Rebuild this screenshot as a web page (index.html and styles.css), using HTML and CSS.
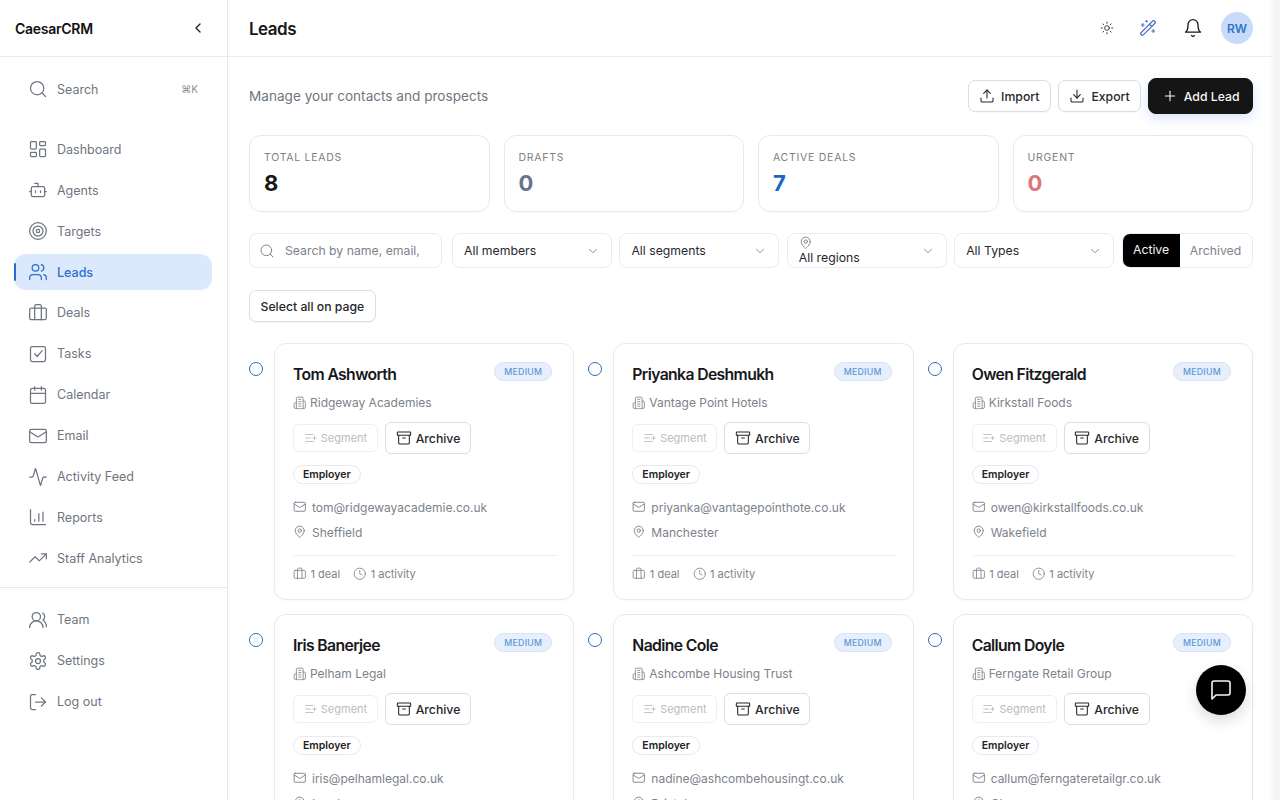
FILE: index.html
```html
<!DOCTYPE html>
<html lang="en">
<head>
    <meta charset="UTF-8">
    <meta name="viewport" content="width=device-width, initial-scale=1.0">
    <title>CaesarCRM - Leads</title>
    <link rel="stylesheet" href="styles.css">
</head>
<body>
    <svg class="icon-defs" xmlns="http://www.w3.org/2000/svg">
        <symbol id="i-search" viewBox="0 0 24 24"><circle cx="11" cy="11" r="8"/><path d="m21 21-4.3-4.3"/></symbol>
        <symbol id="i-dashboard" viewBox="0 0 24 24"><rect x="3" y="3" width="7" height="9" rx="1"/><rect x="14" y="3" width="7" height="5" rx="1"/><rect x="14" y="12" width="7" height="9" rx="1"/><rect x="3" y="16" width="7" height="5" rx="1"/></symbol>
        <symbol id="i-bot" viewBox="0 0 24 24"><path d="M12 8V4H8"/><rect x="4" y="8" width="16" height="12" rx="2"/><path d="M2 14h2"/><path d="M20 14h2"/><path d="M15 13v2"/><path d="M9 13v2"/></symbol>
        <symbol id="i-target" viewBox="0 0 24 24"><circle cx="12" cy="12" r="10"/><circle cx="12" cy="12" r="6"/><circle cx="12" cy="12" r="2"/></symbol>
        <symbol id="i-users" viewBox="0 0 24 24"><path d="M16 21v-2a4 4 0 0 0-4-4H6a4 4 0 0 0-4 4v2"/><circle cx="9" cy="7" r="4"/><path d="M22 21v-2a4 4 0 0 0-3-3.87"/><path d="M16 3.13a4 4 0 0 1 0 7.75"/></symbol>
        <symbol id="i-team" viewBox="0 0 24 24"><path d="M18 21a8 8 0 0 0-16 0"/><circle cx="10" cy="8" r="5"/><path d="M22 20c0-3.37-2-6.5-4-8a5 5 0 0 0-.45-8.3"/></symbol>
        <symbol id="i-briefcase" viewBox="0 0 24 24"><path d="M16 20V4a2 2 0 0 0-2-2h-4a2 2 0 0 0-2 2v16"/><rect x="2" y="6" width="20" height="14" rx="2"/></symbol>
        <symbol id="i-check" viewBox="0 0 24 24"><rect x="3" y="3" width="18" height="18" rx="2"/><path d="m8 12 3 3 6-7"/></symbol>
        <symbol id="i-calendar" viewBox="0 0 24 24"><path d="M8 2v4"/><path d="M16 2v4"/><rect x="3" y="4" width="18" height="18" rx="2"/><path d="M3 10h18"/></symbol>
        <symbol id="i-mail" viewBox="0 0 24 24"><rect x="2" y="4" width="20" height="16" rx="2"/><path d="m22 7-8.97 5.7a1.94 1.94 0 0 1-2.06 0L2 7"/></symbol>
        <symbol id="i-activity" viewBox="0 0 24 24"><path d="M22 12h-2.48a2 2 0 0 0-1.93 1.46l-2.35 8.36a.25.25 0 0 1-.48 0L9.24 2.18a.25.25 0 0 0-.48 0l-2.35 8.36A2 2 0 0 1 4.49 12H2"/></symbol>
        <symbol id="i-chart" viewBox="0 0 24 24"><path d="M3 3v16a2 2 0 0 0 2 2h16"/><path d="M8 17v-2"/><path d="M13 17V8"/><path d="M18 17V6"/></symbol>
        <symbol id="i-trend" viewBox="0 0 24 24"><path d="M22 7 13.5 15.5l-5-5L2 17"/><path d="M16 7h6v6"/></symbol>
        <symbol id="i-settings" viewBox="0 0 24 24"><path d="M12.22 2h-.44a2 2 0 0 0-2 2v.18a2 2 0 0 1-1 1.73l-.43.25a2 2 0 0 1-2 0l-.15-.08a2 2 0 0 0-2.73.73l-.22.38a2 2 0 0 0 .73 2.73l.15.1a2 2 0 0 1 1 1.72v.51a2 2 0 0 1-1 1.74l-.15.09a2 2 0 0 0-.73 2.73l.22.38a2 2 0 0 0 2.73.73l.15-.08a2 2 0 0 1 2 0l.43.25a2 2 0 0 1 1 1.73V20a2 2 0 0 0 2 2h.44a2 2 0 0 0 2-2v-.18a2 2 0 0 1 1-1.73l.43-.25a2 2 0 0 1 2 0l.15.08a2 2 0 0 0 2.73-.73l.22-.39a2 2 0 0 0-.73-2.73l-.15-.08a2 2 0 0 1-1-1.74v-.5a2 2 0 0 1 1-1.74l.15-.09a2 2 0 0 0 .73-2.73l-.22-.38a2 2 0 0 0-2.73-.73l-.15.08a2 2 0 0 1-2 0l-.43-.25a2 2 0 0 1-1-1.73V4a2 2 0 0 0-2-2z"/><circle cx="12" cy="12" r="3"/></symbol>
        <symbol id="i-logout" viewBox="0 0 24 24"><path d="M9 21H5a2 2 0 0 1-2-2V5a2 2 0 0 1 2-2h4"/><path d="m16 17 5-5-5-5"/><path d="M21 12H9"/></symbol>
        <symbol id="i-chevron-left" viewBox="0 0 24 24"><path d="m15 18-6-6 6-6"/></symbol>
        <symbol id="i-chevron-down" viewBox="0 0 24 24"><path d="m6 9 6 6 6-6"/></symbol>
        <symbol id="i-sun" viewBox="0 0 24 24"><circle cx="12" cy="12" r="4"/><path d="M12 2v2"/><path d="M12 20v2"/><path d="m4.93 4.93 1.41 1.41"/><path d="m17.66 17.66 1.41 1.41"/><path d="M2 12h2"/><path d="M20 12h2"/><path d="m6.34 17.66-1.41 1.41"/><path d="m19.07 4.93-1.41 1.41"/></symbol>
        <symbol id="i-wand" viewBox="0 0 24 24"><path d="m21.64 3.64-1.28-1.28a1.21 1.21 0 0 0-1.72 0L2.36 18.64a1.21 1.21 0 0 0 0 1.72l1.28 1.28a1.2 1.2 0 0 0 1.72 0L21.64 5.36a1.2 1.2 0 0 0 0-1.72"/><path d="m14 7 3 3"/><path d="M5 6v4"/><path d="M19 14v4"/><path d="M10 2v2"/><path d="M7 8H3"/><path d="M21 16h-4"/><path d="M11 3H9"/></symbol>
        <symbol id="i-bell" viewBox="0 0 24 24"><path d="M6 8a6 6 0 0 1 12 0c0 7 3 9 3 9H3s3-2 3-9"/><path d="M10.3 21a1.94 1.94 0 0 0 3.4 0"/></symbol>
        <symbol id="i-upload" viewBox="0 0 24 24"><path d="M21 15v4a2 2 0 0 1-2 2H5a2 2 0 0 1-2-2v-4"/><path d="m17 8-5-5-5 5"/><path d="M12 3v12"/></symbol>
        <symbol id="i-download" viewBox="0 0 24 24"><path d="M21 15v4a2 2 0 0 1-2 2H5a2 2 0 0 1-2-2v-4"/><path d="m7 10 5 5 5-5"/><path d="M12 15V3"/></symbol>
        <symbol id="i-plus" viewBox="0 0 24 24"><path d="M5 12h14"/><path d="M12 5v14"/></symbol>
        <symbol id="i-pin" viewBox="0 0 24 24"><path d="M20 10c0 6-8 12-8 12s-8-6-8-12a8 8 0 0 1 16 0Z"/><circle cx="12" cy="10" r="3"/></symbol>
        <symbol id="i-building" viewBox="0 0 24 24"><path d="M6 22V4a2 2 0 0 1 2-2h8a2 2 0 0 1 2 2v18Z"/><path d="M6 12H4a2 2 0 0 0-2 2v6a2 2 0 0 0 2 2h2"/><path d="M18 9h2a2 2 0 0 1 2 2v9a2 2 0 0 1-2 2h-2"/><path d="M10 6h4"/><path d="M10 10h4"/><path d="M10 14h4"/><path d="M10 18h4"/></symbol>
        <symbol id="i-archive" viewBox="0 0 24 24"><rect x="2" y="3" width="20" height="5" rx="1"/><path d="M4 8v11a2 2 0 0 0 2 2h12a2 2 0 0 0 2-2V8"/><path d="M10 12h4"/></symbol>
        <symbol id="i-segment" viewBox="0 0 24 24"><path d="M11 12H3"/><path d="M16 6H3"/><path d="M16 18H3"/><path d="M18 9v6"/><path d="M21 12h-6"/></symbol>
        <symbol id="i-clock" viewBox="0 0 24 24"><circle cx="12" cy="12" r="10"/><path d="M12 6v6l4 2"/></symbol>
        <symbol id="i-message" viewBox="0 0 24 24"><path d="M21 15a2 2 0 0 1-2 2H7l-4 4V5a2 2 0 0 1 2-2h14a2 2 0 0 1 2 2z"/></symbol>
    </svg>

    <div class="app">
        <aside class="sidebar">
            <div class="brand">
                <span class="brand-name">CaesarCRM</span>
                <svg class="icon brand-toggle"><use href="#i-chevron-left"/></svg>
            </div>
            <div class="side-search">
                <a class="nav-item">
                    <svg class="icon nav-icon"><use href="#i-search"/></svg>
                    <span>Search</span>
                    <span class="shortcut">⌘K</span>
                </a>
            </div>
            <nav class="nav-main">
                <a class="nav-item"><svg class="icon nav-icon"><use href="#i-dashboard"/></svg><span>Dashboard</span></a>
                <a class="nav-item"><svg class="icon nav-icon"><use href="#i-bot"/></svg><span>Agents</span></a>
                <a class="nav-item"><svg class="icon nav-icon"><use href="#i-target"/></svg><span>Targets</span></a>
                <a class="nav-item active"><svg class="icon nav-icon"><use href="#i-users"/></svg><span>Leads</span></a>
                <a class="nav-item"><svg class="icon nav-icon"><use href="#i-briefcase"/></svg><span>Deals</span></a>
                <a class="nav-item"><svg class="icon nav-icon"><use href="#i-check"/></svg><span>Tasks</span></a>
                <a class="nav-item"><svg class="icon nav-icon"><use href="#i-calendar"/></svg><span>Calendar</span></a>
                <a class="nav-item"><svg class="icon nav-icon"><use href="#i-mail"/></svg><span>Email</span></a>
                <a class="nav-item"><svg class="icon nav-icon"><use href="#i-activity"/></svg><span>Activity Feed</span></a>
                <a class="nav-item"><svg class="icon nav-icon"><use href="#i-chart"/></svg><span>Reports</span></a>
                <a class="nav-item"><svg class="icon nav-icon"><use href="#i-trend"/></svg><span>Staff Analytics</span></a>
            </nav>
            <nav class="nav-bottom">
                <a class="nav-item"><svg class="icon nav-icon"><use href="#i-team"/></svg><span>Team</span></a>
                <a class="nav-item"><svg class="icon nav-icon"><use href="#i-settings"/></svg><span>Settings</span></a>
                <a class="nav-item"><svg class="icon nav-icon"><use href="#i-logout"/></svg><span>Log out</span></a>
            </nav>
        </aside>

        <div class="main">
            <header class="topbar">
                <h1>Leads</h1>
                <div class="topbar-actions">
                    <svg class="icon icon-sun"><use href="#i-sun"/></svg>
                    <svg class="icon icon-wand"><use href="#i-wand"/></svg>
                    <svg class="icon icon-bell"><use href="#i-bell"/></svg>
                    <div class="avatar">RW</div>
                </div>
            </header>

            <main class="content">
                <div class="page-head">
                    <p class="subtitle">Manage your contacts and prospects</p>
                    <div class="page-actions">
                        <button class="btn"><svg class="icon"><use href="#i-upload"/></svg>Import</button>
                        <button class="btn"><svg class="icon"><use href="#i-download"/></svg>Export</button>
                        <button class="btn btn-primary"><svg class="icon"><use href="#i-plus"/></svg>Add Lead</button>
                    </div>
                </div>

                <div class="stats">
                    <div class="stat-card"><div class="stat-label">Total Leads</div><div class="stat-value">8</div></div>
                    <div class="stat-card"><div class="stat-label">Drafts</div><div class="stat-value slate">0</div></div>
                    <div class="stat-card"><div class="stat-label">Active Deals</div><div class="stat-value blue">7</div></div>
                    <div class="stat-card"><div class="stat-label">Urgent</div><div class="stat-value red">0</div></div>
                </div>

                <div class="filters">
                    <div class="filter-search">
                        <svg class="icon"><use href="#i-search"/></svg>
                        <span>Search by name, email,</span>
                    </div>
                    <div class="select">All members<svg class="icon"><use href="#i-chevron-down"/></svg></div>
                    <div class="select">All segments<svg class="icon"><use href="#i-chevron-down"/></svg></div>
                    <div class="select">
                        <div class="select-stack"><svg class="icon"><use href="#i-pin"/></svg><span>All regions</span></div>
                        <svg class="icon"><use href="#i-chevron-down"/></svg>
                    </div>
                    <div class="select">All Types<svg class="icon"><use href="#i-chevron-down"/></svg></div>
                    <div class="toggle">
                        <span class="toggle-on">Active</span>
                        <span class="toggle-off">Archived</span>
                    </div>
                </div>

                <button class="btn btn-select">Select all on page</button>

                <div class="lead-grid">
                    <div class="lead-cell">
                        <span class="radio"></span>
                        <article class="lead-card">
                            <div class="lead-top"><h2>Tom Ashworth</h2><span class="badge">MEDIUM</span></div>
                            <div class="company"><svg class="icon"><use href="#i-building"/></svg>Ridgeway Academies</div>
                            <div class="lead-btns">
                                <span class="btn-segment"><svg class="icon"><use href="#i-segment"/></svg>Segment</span>
                                <span class="btn-archive"><svg class="icon"><use href="#i-archive"/></svg>Archive</span>
                            </div>
                            <span class="tag">Employer</span>
                            <div class="info"><svg class="icon"><use href="#i-mail"/></svg>tom@ridgewayacademie.co.uk</div>
                            <div class="info"><svg class="icon"><use href="#i-pin"/></svg>Sheffield</div>
                            <div class="lead-foot">
                                <span><svg class="icon"><use href="#i-briefcase"/></svg>1 deal</span>
                                <span><svg class="icon"><use href="#i-clock"/></svg>1 activity</span>
                            </div>
                        </article>
                    </div>
                    <div class="lead-cell">
                        <span class="radio"></span>
                        <article class="lead-card">
                            <div class="lead-top"><h2>Priyanka Deshmukh</h2><span class="badge">MEDIUM</span></div>
                            <div class="company"><svg class="icon"><use href="#i-building"/></svg>Vantage Point Hotels</div>
                            <div class="lead-btns">
                                <span class="btn-segment"><svg class="icon"><use href="#i-segment"/></svg>Segment</span>
                                <span class="btn-archive"><svg class="icon"><use href="#i-archive"/></svg>Archive</span>
                            </div>
                            <span class="tag">Employer</span>
                            <div class="info"><svg class="icon"><use href="#i-mail"/></svg>priyanka@vantagepointhote.co.uk</div>
                            <div class="info"><svg class="icon"><use href="#i-pin"/></svg>Manchester</div>
                            <div class="lead-foot">
                                <span><svg class="icon"><use href="#i-briefcase"/></svg>1 deal</span>
                                <span><svg class="icon"><use href="#i-clock"/></svg>1 activity</span>
                            </div>
                        </article>
                    </div>
                    <div class="lead-cell">
                        <span class="radio"></span>
                        <article class="lead-card">
                            <div class="lead-top"><h2>Owen Fitzgerald</h2><span class="badge">MEDIUM</span></div>
                            <div class="company"><svg class="icon"><use href="#i-building"/></svg>Kirkstall Foods</div>
                            <div class="lead-btns">
                                <span class="btn-segment"><svg class="icon"><use href="#i-segment"/></svg>Segment</span>
                                <span class="btn-archive"><svg class="icon"><use href="#i-archive"/></svg>Archive</span>
                            </div>
                            <span class="tag">Employer</span>
                            <div class="info"><svg class="icon"><use href="#i-mail"/></svg>owen@kirkstallfoods.co.uk</div>
                            <div class="info"><svg class="icon"><use href="#i-pin"/></svg>Wakefield</div>
                            <div class="lead-foot">
                                <span><svg class="icon"><use href="#i-briefcase"/></svg>1 deal</span>
                                <span><svg class="icon"><use href="#i-clock"/></svg>1 activity</span>
                            </div>
                        </article>
                    </div>
                    <div class="lead-cell">
                        <span class="radio"></span>
                        <article class="lead-card">
                            <div class="lead-top"><h2>Iris Banerjee</h2><span class="badge">MEDIUM</span></div>
                            <div class="company"><svg class="icon"><use href="#i-building"/></svg>Pelham Legal</div>
                            <div class="lead-btns">
                                <span class="btn-segment"><svg class="icon"><use href="#i-segment"/></svg>Segment</span>
                                <span class="btn-archive"><svg class="icon"><use href="#i-archive"/></svg>Archive</span>
                            </div>
                            <span class="tag">Employer</span>
                            <div class="info"><svg class="icon"><use href="#i-mail"/></svg>iris@pelhamlegal.co.uk</div>
                            <div class="info"><svg class="icon"><use href="#i-pin"/></svg>Leeds</div>
                        </article>
                    </div>
                    <div class="lead-cell">
                        <span class="radio"></span>
                        <article class="lead-card">
                            <div class="lead-top"><h2>Nadine Cole</h2><span class="badge">MEDIUM</span></div>
                            <div class="company"><svg class="icon"><use href="#i-building"/></svg>Ashcombe Housing Trust</div>
                            <div class="lead-btns">
                                <span class="btn-segment"><svg class="icon"><use href="#i-segment"/></svg>Segment</span>
                                <span class="btn-archive"><svg class="icon"><use href="#i-archive"/></svg>Archive</span>
                            </div>
                            <span class="tag">Employer</span>
                            <div class="info"><svg class="icon"><use href="#i-mail"/></svg>nadine@ashcombehousingt.co.uk</div>
                            <div class="info"><svg class="icon"><use href="#i-pin"/></svg>Bristol</div>
                        </article>
                    </div>
                    <div class="lead-cell">
                        <span class="radio"></span>
                        <article class="lead-card">
                            <div class="lead-top"><h2>Callum Doyle</h2><span class="badge">MEDIUM</span></div>
                            <div class="company"><svg class="icon"><use href="#i-building"/></svg>Ferngate Retail Group</div>
                            <div class="lead-btns">
                                <span class="btn-segment"><svg class="icon"><use href="#i-segment"/></svg>Segment</span>
                                <span class="btn-archive"><svg class="icon"><use href="#i-archive"/></svg>Archive</span>
                            </div>
                            <span class="tag">Employer</span>
                            <div class="info"><svg class="icon"><use href="#i-mail"/></svg>callum@ferngateretailgr.co.uk</div>
                            <div class="info"><svg class="icon"><use href="#i-pin"/></svg>Glasgow</div>
                        </article>
                    </div>
                </div>
            </main>
        </div>
    </div>

    <button class="chat-fab"><svg class="icon"><use href="#i-message"/></svg></button>
</body>
</html>
```

FILE: styles.css
```css
* {
    box-sizing: border-box;
}

html,
body {
    height: 100%;
}

body {
    margin: 0;
    font-family: Inter, "Liberation Sans", sans-serif;
    color: #18181b;
    background: #fff;
    overflow: hidden;
}

/* soft shade down the right edge of the window */
body::after {
    content: "";
    position: fixed;
    top: 0;
    right: 0;
    bottom: 0;
    width: 12px;
    background: linear-gradient(to right, rgba(240, 240, 240, 0), #f4f4f4 65%);
    pointer-events: none;
}

.icon-defs {
    display: none;
}

.icon {
    width: 16px;
    height: 16px;
    flex: none;
    fill: none;
    stroke: currentColor;
    stroke-width: 2;
    stroke-linecap: round;
    stroke-linejoin: round;
}

.app {
    display: flex;
    width: 1275px;
    height: 800px;
}

/* sidebar */
.sidebar {
    width: 228px;
    flex: none;
    border-right: 1px solid #e8e9ec;
    display: flex;
    flex-direction: column;
}

.brand {
    height: 57px;
    flex: none;
    display: flex;
    align-items: center;
    justify-content: space-between;
    padding: 0 21px 0 15px;
    border-bottom: 1px solid #e8e9ec;
}

.brand-name {
    font-size: 14px;
    font-weight: 600;
    letter-spacing: -0.02em;
    color: #111;
}

.brand-toggle {
    width: 16px;
    height: 16px;
    color: #222;
}

.side-search {
    padding: 14px 15px 0 14px;
}

.nav-main {
    display: flex;
    flex-direction: column;
    gap: 4.9px;
    padding: 24.4px 15px 10.6px 14px;
    border-bottom: 1px solid #e8e9ec;
}

.nav-bottom {
    display: flex;
    flex-direction: column;
    gap: 5px;
    padding: 14px 15px 0 14px;
}

.nav-item {
    position: relative;
    display: flex;
    align-items: center;
    gap: 9.5px;
    height: 36px;
    padding: 0 14px 0 13.5px;
    border-radius: 12px;
    font-size: 12.5px;
    font-weight: 400;
    color: #6f7580;
}

.nav-icon {
    width: 20px;
    height: 20px;
    stroke-width: 1.5;
}

.nav-item.active {
    background: #dce8fb;
    color: #2a6fd0;
    font-weight: 500;
}

.nav-item.active::before {
    content: "";
    position: absolute;
    left: 0;
    top: 9px;
    bottom: 9px;
    width: 2px;
    border-radius: 2px;
    background: #2a6fd0;
}

.shortcut {
    margin-left: auto;
    font-size: 10px;
    color: #8a8f98;
}

/* top bar */
.main {
    flex: 1;
    min-width: 0;
    display: flex;
    flex-direction: column;
}

.topbar {
    height: 57px;
    flex: none;
    display: flex;
    align-items: center;
    justify-content: space-between;
    padding: 1px 22px 0 21px;
    border-bottom: 1px solid #eceded;
}

.topbar h1 {
    margin: 0;
    font-size: 17px;
    font-weight: 600;
    letter-spacing: -0.03em;
    color: #18181b;
}

.topbar-actions {
    display: flex;
    align-items: center;
    margin-top: -1px;
}

.icon-sun {
    width: 14px;
    height: 14px;
    stroke-width: 1.6;
    color: #333;
    margin-right: 25px;
}

.icon-wand {
    width: 18px;
    height: 18px;
    stroke-width: 1.5;
    color: #4a6fc9;
    margin-right: 26px;
}

.icon-bell {
    width: 20px;
    height: 20px;
    stroke-width: 1.6;
    color: #1a1a1a;
    margin-right: 18px;
}

.avatar {
    width: 32px;
    height: 32px;
    border-radius: 50%;
    background: #c8dcfa;
    color: #2f74c8;
    font-size: 12px;
    font-weight: 600;
    display: flex;
    align-items: center;
    justify-content: center;
}

/* content */
.content {
    flex: 1;
    min-height: 0;
    overflow: hidden;
    padding: 22px 22px 0 21px;
}

.page-head {
    display: flex;
    align-items: center;
    justify-content: space-between;
    height: 34px;
    margin-bottom: 22px;
}

.subtitle {
    margin: 0;
    font-size: 13.6px;
    color: #71767f;
}

.page-actions {
    display: flex;
    align-items: center;
    gap: 7px;
}

.btn {
    display: inline-flex;
    align-items: center;
    gap: 6px;
    height: 32px;
    padding: 0 10.5px;
    border: 1px solid #dcdde0;
    border-radius: 7px;
    background: #fff;
    color: #27272a;
    font-family: inherit;
    font-size: 12.25px;
    font-weight: 500;
    box-shadow: 0 1px 1px rgba(0, 0, 0, 0.03);
}

.btn .icon {
    width: 16px;
    height: 16px;
    stroke-width: 1.6;
}

.btn-primary {
    height: 36px;
    padding: 0 12.5px;
    border-color: #151515;
    border-radius: 8px;
    background: #151515;
    color: #f5f5f5;
    box-shadow: 0 4px 12px rgba(70, 130, 230, 0.22);
}

.stats {
    display: grid;
    grid-template-columns: repeat(4, 1fr);
    gap: 14px;
    margin-bottom: 21px;
}

.stat-card {
    height: 77px;
    padding: 15px 14px 0;
    border: 1px solid #e8e9ec;
    border-radius: 12px;
    box-shadow: 0 1px 2px rgba(0, 0, 0, 0.02);
}

.stat-label {
    font-size: 10.5px;
    letter-spacing: 0.07em;
    text-transform: uppercase;
    color: #7a7f88;
    line-height: 13px;
}

.stat-value {
    margin-top: 6px;
    font-size: 22px;
    font-weight: 700;
    line-height: 27px;
    color: #18181b;
}

.stat-value.slate {
    color: #64748b;
}

.stat-value.blue {
    color: #1f66c4;
}

.stat-value.red {
    color: #e07378;
}

.filters {
    display: flex;
    height: 35px;
    gap: 7.4px;
    margin-bottom: 22px;
}

.filter-search {
    width: 193px;
    margin-right: 2.6px;
    display: flex;
    align-items: center;
    gap: 10px;
    padding: 0 10px 0 9px;
    border: 1px solid #eaebed;
    border-radius: 8px;
    font-size: 12.25px;
    color: #7d828b;
    white-space: nowrap;
    overflow: hidden;
}

.filter-search .icon {
    width: 16px;
    height: 16px;
    stroke-width: 1.5;
}

.select {
    width: 160px;
    display: flex;
    align-items: center;
    justify-content: space-between;
    padding: 0 11px;
    border: 1px solid #eaebed;
    border-radius: 8px;
    font-size: 12.25px;
    color: #27272a;
}

.select > .icon {
    width: 14px;
    height: 14px;
    stroke-width: 1.5;
    color: #7d828b;
}

.select-stack {
    display: flex;
    flex-direction: column;
    line-height: 15px;
}

.select-stack .icon {
    width: 13.5px;
    height: 13.5px;
    stroke-width: 1.5;
    color: #71767f;
}

.toggle {
    display: flex;
    width: 131px;
    border: 1px solid #eaebed;
    border-radius: 8px;
    overflow: hidden;
    font-size: 12.25px;
}

.toggle-on {
    width: 57px;
    display: flex;
    align-items: center;
    justify-content: center;
    padding-bottom: 2px;
    background: #000;
    color: #f5f5f5;
}

.toggle-off {
    flex: 1;
    display: flex;
    align-items: center;
    justify-content: center;
    color: #7d828b;
}

.btn-select {
    display: flex;
    margin-bottom: 21px;
}

/* lead cards */
.lead-grid {
    display: grid;
    grid-template-columns: repeat(3, 1fr);
    gap: 14px;
}

.lead-cell {
    display: flex;
    align-items: flex-start;
    gap: 11px;
}

.radio {
    width: 14px;
    height: 14px;
    flex: none;
    margin-top: 19px;
    border: 1.3px solid #2f6db5;
    border-radius: 50%;
}

.lead-card {
    flex: 1;
    min-width: 0;
    height: 257px;
    padding: 18px 16px 0 18px;
    border: 1px solid #e8e9ec;
    border-radius: 12px;
    box-shadow: 0 1px 2px rgba(0, 0, 0, 0.03);
    display: flex;
    flex-direction: column;
    align-items: flex-start;
}

.lead-top {
    width: 100%;
    display: flex;
    align-items: flex-start;
    justify-content: space-between;
    padding-right: 5px;
}

.lead-top h2 {
    margin: 0;
    font-size: 15.75px;
    font-weight: 600;
    letter-spacing: -0.04em;
    line-height: 26px;
    color: #18181b;
}

.badge {
    height: 19px;
    padding: 0 9px;
    display: flex;
    align-items: center;
    border: 1px solid #d5e3f7;
    border-radius: 10px;
    background: #e6effb;
    font-size: 8.75px;
    font-weight: 500;
    letter-spacing: 0.03em;
    color: #5c9ad8;
}

.company {
    display: flex;
    align-items: center;
    gap: 3.5px;
    margin-top: 6px;
    font-size: 12px;
    line-height: 18px;
    color: #7d828b;
}

.company .icon {
    width: 13.5px;
    height: 13.5px;
    stroke-width: 1.5;
}

.lead-btns {
    display: flex;
    align-items: center;
    gap: 7px;
    margin-top: 10px;
}

.btn-segment {
    height: 28px;
    width: 85px;
    display: flex;
    align-items: center;
    justify-content: center;
    gap: 3px;
    border: 1px solid #eeeff1;
    border-radius: 6px;
    font-size: 11px;
    color: #b9bcc2;
}

.btn-segment .icon {
    width: 14px;
    height: 14px;
    stroke-width: 1.5;
}

.btn-archive {
    height: 32px;
    width: 86px;
    display: flex;
    align-items: center;
    justify-content: center;
    gap: 4px;
    border: 1px solid #dcdde0;
    border-radius: 6px;
    font-size: 12.25px;
    font-weight: 500;
    color: #27272a;
}

.btn-archive .icon {
    width: 16px;
    height: 16px;
    stroke-width: 1.6;
}

.tag {
    height: 19px;
    margin-top: 11px;
    padding: 0 9px;
    display: flex;
    align-items: center;
    border: 1px solid #e8e9ec;
    border-radius: 10px;
    font-size: 10.5px;
    font-weight: 600;
    color: #222;
}

.info {
    display: flex;
    align-items: center;
    gap: 5.5px;
    font-size: 12px;
    line-height: 25px;
    color: #7d828b;
}

.tag + .info {
    margin-top: 10.5px;
}

.info .icon {
    width: 13.5px;
    height: 13.5px;
    stroke-width: 1.5;
    color: #6f7580;
}

.lead-foot {
    width: 100%;
    margin-top: 10px;
    padding-top: 9px;
    border-top: 1px solid #f0f1f2;
    display: flex;
    gap: 13px;
    font-size: 11px;
    line-height: 18px;
    color: #7d828b;
}

.lead-foot span {
    display: flex;
    align-items: center;
    gap: 4px;
}

.lead-foot .icon {
    width: 13.5px;
    height: 13.5px;
    stroke-width: 1.5;
}

/* floating chat button */
.chat-fab {
    position: fixed;
    left: 1196px;
    top: 665px;
    width: 50px;
    height: 50px;
    border: 0;
    border-radius: 50%;
    background: #000;
    color: #f5f5f5;
    display: flex;
    align-items: center;
    justify-content: center;
    box-shadow: 0 6px 14px rgba(0, 0, 0, 0.14);
}

.chat-fab .icon {
    width: 24px;
    height: 24px;
    stroke-width: 1.6;
}
```
